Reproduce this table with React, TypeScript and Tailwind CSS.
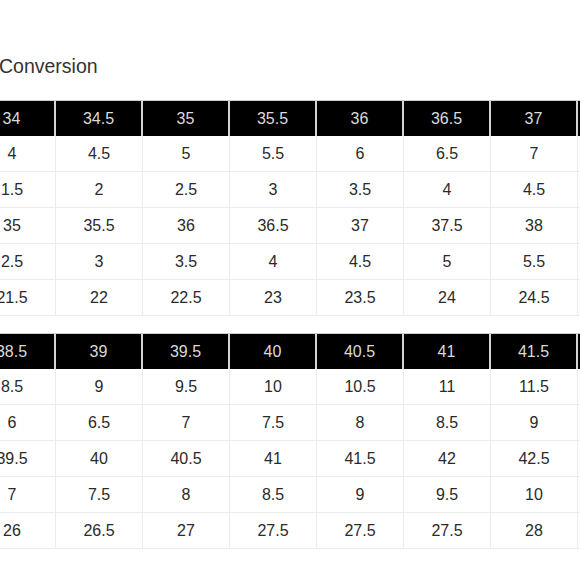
const tables = [
  {
    head: ["34", "34.5", "35", "35.5", "36", "36.5", "37", ""],
    rows: [
      ["4", "4.5", "5", "5.5", "6", "6.5", "7", ""],
      ["1.5", "2", "2.5", "3", "3.5", "4", "4.5", ""],
      ["35", "35.5", "36", "36.5", "37", "37.5", "38", ""],
      ["2.5", "3", "3.5", "4", "4.5", "5", "5.5", ""],
      ["21.5", "22", "22.5", "23", "23.5", "24", "24.5", ""],
    ],
  },
  {
    head: ["38.5", "39", "39.5", "40", "40.5", "41", "41.5", ""],
    rows: [
      ["8.5", "9", "9.5", "10", "10.5", "11", "11.5", ""],
      ["6", "6.5", "7", "7.5", "8", "8.5", "9", ""],
      ["39.5", "40", "40.5", "41", "41.5", "42", "42.5", ""],
      ["7", "7.5", "8", "8.5", "9", "9.5", "10", ""],
      ["26", "26.5", "27", "27.5", "27.5", "27.5", "28", ""],
    ],
  },
]

function SizeTable({ head, rows }: { head: string[]; rows: string[][] }) {
  return (
    <div className="ml-[-31px] flex flex-col">
      <div className="flex border-t border-[#cfcfcf]">
        {head.map((h, i) => (
          <div
            key={i}
            className="flex h-[35px] w-[87px] shrink-0 items-center justify-center border-r-2 border-[#d4d4d4] bg-black text-[#dadada]"
          >
            {h}
          </div>
        ))}
      </div>
      {rows.map((r, ri) => (
        <div key={ri} className="flex">
          {r.map((c, ci) => (
            <div
              key={ci}
              className="flex h-[36px] w-[87px] shrink-0 items-center justify-center border-r border-b border-[#ececec] text-[#2a2a2a]"
            >
              {c}
            </div>
          ))}
        </div>
      ))}
    </div>
  )
}

export default function App() {
  return (
    <div className="h-[580px] w-[580px] overflow-hidden bg-white font-['Liberation_Sans',Arial,sans-serif] text-[16px]">
      <div className="mt-[54px] ml-[-1px] text-[19.5px] leading-[24px] text-[#333]">Conversion</div>
      <div className="mt-[22px] flex flex-col gap-[17px]">
        {tables.map((t, i) => (
          <SizeTable key={i} head={t.head} rows={t.rows} />
        ))}
      </div>
    </div>
  )
}
